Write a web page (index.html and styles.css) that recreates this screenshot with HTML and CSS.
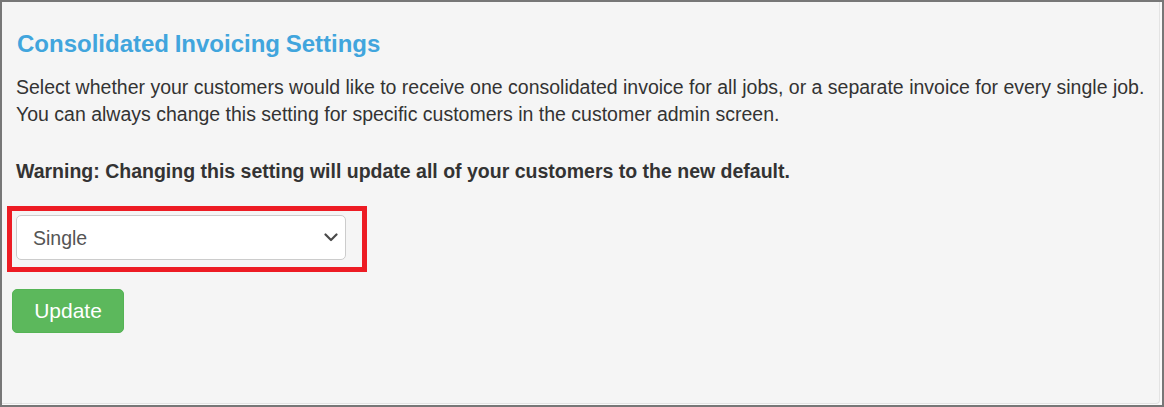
FILE: index.html
```html
<!DOCTYPE html>
<html lang="en">
<head>
<meta charset="utf-8">
<title>Consolidated Invoicing Settings</title>
<link rel="stylesheet" href="styles.css">
</head>
<body>
<div class="frame">
  <div class="well">
    <h3 class="title">Consolidated Invoicing Settings</h3>
    <p class="desc">Select whether your customers would like to receive one consolidated invoice for all jobs, or a separate invoice for every single job.<br>You can always change this setting for specific customers in the customer admin screen.</p>
    <p class="warning">Warning: Changing this setting will update all of your customers to the new default.</p>
    <div class="highlight">
      <div class="select-wrap">
        <select class="select">
          <option selected>Single</option>
          <option>Consolidated</option>
        </select>
        <svg class="chevron" width="14" height="9" viewBox="0 0 14 9" aria-hidden="true">
          <polyline points="1.5,1.5 7,7 12.5,1.5" fill="none" stroke="#4a4a4a" stroke-width="2.2" stroke-linecap="round" stroke-linejoin="round"/>
        </svg>
      </div>
    </div>
    <button class="btn-update" type="button">Update</button>
  </div>
</div>
</body>
</html>
```

FILE: styles.css
```css
html, body {
  margin: 0;
  padding: 0;
  background: #ffffff;
}

body {
  font-family: "Liberation Sans", Arial, sans-serif;
  color: #333333;
}

.frame {
  box-sizing: border-box;
  width: 1164px;
  height: 407px;
  border: 2px solid #777777;
  display: flex;
  padding-right: 2px;
  background: #fafafa;
}

.well {
  flex: 1;
  box-sizing: border-box;
  background: #f5f5f5;
  border-right: 1px solid #e3e3e3;
  border-bottom: 1px solid #e3e3e3;
  border-radius: 0 0 4px 0;
  padding: 28.5px 0 0 14px;
  margin-bottom: 1px;
}

.title {
  margin: 0 0 0 1px;
  font-size: 24px;
  line-height: 26.4px;
  font-weight: bold;
  color: #41a5dd;
  word-spacing: -1px;
}

.desc {
  margin: 17px 0 0 0;
  font-size: 19.5px;
  line-height: 26.7px;
}

.warning {
  margin: 31px 0 0 0;
  font-size: 19.5px;
  line-height: 26.7px;
  font-weight: bold;
}

.highlight {
  display: inline-block;
  margin: 21px 0 0 -9px;
  border: 5px solid #ed1c24;
  padding: 4px 16px 7px 4px;
}

.select-wrap {
  position: relative;
  width: 330px;
  height: 45px;
}

.select {
  appearance: none;
  -webkit-appearance: none;
  box-sizing: border-box;
  width: 330px;
  height: 45px;
  margin: 0;
  padding: 0 0 0 16px;
  border: 1px solid #cccccc;
  border-radius: 5px;
  background: #ffffff;
  font-family: "Liberation Sans", Arial, sans-serif;
  font-size: 19.5px;
  color: #555555;
  display: block;
}

.chevron {
  position: absolute;
  left: 308px;
  top: 18px;
  pointer-events: none;
}

.btn-update {
  display: block;
  box-sizing: border-box;
  width: 112px;
  height: 44px;
  margin: 17px 0 0 -4px;
  padding: 0;
  border: 1px solid #55b455;
  border-radius: 5px;
  background: #5cb85c;
  color: #ffffff;
  font-family: "Liberation Sans", Arial, sans-serif;
  font-size: 21px;
  line-height: 40px;
  text-align: center;
}
```
